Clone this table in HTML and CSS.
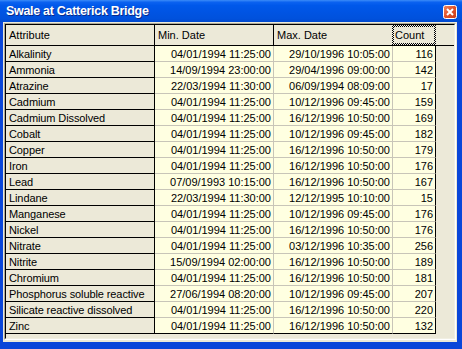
FILE: index.html
```html
<!DOCTYPE html>
<html>
<head>
<meta charset="utf-8">
<link rel="stylesheet" href="styles.css">
</head>
<body>
<div class="window">
  <div class="titlebar">
    <span class="title">Swale at Catterick Bridge</span>
    <span class="close">
      <svg width="14" height="14" viewBox="0 0 14 14">
        <defs>
          <linearGradient id="cg" x1="0" y1="0" x2="1" y2="1">
            <stop offset="0" stop-color="#F08A62"/>
            <stop offset="0.5" stop-color="#E0522A"/>
            <stop offset="1" stop-color="#C53A16"/>
          </linearGradient>
        </defs>
        <rect x="0.5" y="0.5" width="13" height="13" rx="2" fill="url(#cg)" stroke="#fff"/>
        <path d="M4 4 L10 10 M10 4 L4 10" stroke="#fff" stroke-width="2"/>
      </svg>
    </span>
  </div>
  <div class="client">
    <div class="frame">
      <div class="grid">
        <div class="row head">
          <div class="cell c-attr">Attribute</div>
          <div class="cell c-min">Min. Date</div>
          <div class="cell c-max">Max. Date</div>
          <div class="cell c-count"><span class="focus"><span class="focus-inner">Count</span></span></div>
        </div>
        <div class="row"><div class="cell c-attr">Alkalinity</div><div class="cell c-min">04/01/1994 11:25:00</div><div class="cell c-max">29/10/1996 10:05:00</div><div class="cell c-count">116</div></div>
        <div class="row"><div class="cell c-attr">Ammonia</div><div class="cell c-min">14/09/1994 23:00:00</div><div class="cell c-max">29/04/1996 09:00:00</div><div class="cell c-count">142</div></div>
        <div class="row"><div class="cell c-attr">Atrazine</div><div class="cell c-min">22/03/1994 11:30:00</div><div class="cell c-max">06/09/1994 08:09:00</div><div class="cell c-count">17</div></div>
        <div class="row"><div class="cell c-attr">Cadmium</div><div class="cell c-min">04/01/1994 11:25:00</div><div class="cell c-max">10/12/1996 09:45:00</div><div class="cell c-count">159</div></div>
        <div class="row"><div class="cell c-attr">Cadmium Dissolved</div><div class="cell c-min">04/01/1994 11:25:00</div><div class="cell c-max">16/12/1996 10:50:00</div><div class="cell c-count">169</div></div>
        <div class="row"><div class="cell c-attr">Cobalt</div><div class="cell c-min">04/01/1994 11:25:00</div><div class="cell c-max">10/12/1996 09:45:00</div><div class="cell c-count">182</div></div>
        <div class="row"><div class="cell c-attr">Copper</div><div class="cell c-min">04/01/1994 11:25:00</div><div class="cell c-max">16/12/1996 10:50:00</div><div class="cell c-count">179</div></div>
        <div class="row"><div class="cell c-attr">Iron</div><div class="cell c-min">04/01/1994 11:25:00</div><div class="cell c-max">16/12/1996 10:50:00</div><div class="cell c-count">176</div></div>
        <div class="row"><div class="cell c-attr">Lead</div><div class="cell c-min">07/09/1993 10:15:00</div><div class="cell c-max">16/12/1996 10:50:00</div><div class="cell c-count">167</div></div>
        <div class="row"><div class="cell c-attr">Lindane</div><div class="cell c-min">22/03/1994 11:30:00</div><div class="cell c-max">12/12/1995 10:10:00</div><div class="cell c-count">15</div></div>
        <div class="row"><div class="cell c-attr">Manganese</div><div class="cell c-min">04/01/1994 11:25:00</div><div class="cell c-max">10/12/1996 09:45:00</div><div class="cell c-count">176</div></div>
        <div class="row"><div class="cell c-attr">Nickel</div><div class="cell c-min">04/01/1994 11:25:00</div><div class="cell c-max">16/12/1996 10:50:00</div><div class="cell c-count">176</div></div>
        <div class="row"><div class="cell c-attr">Nitrate</div><div class="cell c-min">04/01/1994 11:25:00</div><div class="cell c-max">03/12/1996 10:35:00</div><div class="cell c-count">256</div></div>
        <div class="row"><div class="cell c-attr">Nitrite</div><div class="cell c-min">15/09/1994 02:00:00</div><div class="cell c-max">16/12/1996 10:50:00</div><div class="cell c-count">189</div></div>
        <div class="row"><div class="cell c-attr">Chromium</div><div class="cell c-min">04/01/1994 11:25:00</div><div class="cell c-max">16/12/1996 10:50:00</div><div class="cell c-count">181</div></div>
        <div class="row"><div class="cell c-attr">Phosphorus soluble reactive</div><div class="cell c-min">27/06/1994 08:20:00</div><div class="cell c-max">10/12/1996 09:45:00</div><div class="cell c-count">207</div></div>
        <div class="row"><div class="cell c-attr">Silicate reactive dissolved</div><div class="cell c-min">04/01/1994 11:25:00</div><div class="cell c-max">16/12/1996 10:50:00</div><div class="cell c-count">220</div></div>
        <div class="row last"><div class="cell c-attr">Zinc</div><div class="cell c-min">04/01/1994 11:25:00</div><div class="cell c-max">16/12/1996 10:50:00</div><div class="cell c-count">132</div></div>
      </div>
    </div>
  </div>
</div>
</body>
</html>
```

FILE: styles.css
```css
html, body {
  margin: 0;
  padding: 0;
}
body {
  width: 462px;
  height: 349px;
  overflow: hidden;
  background: #0A46D9;
  font-family: "Liberation Sans", Arial, sans-serif;
  font-size: 11px;
  color: #000;
}
.window {
  display: flex;
  flex-direction: column;
  width: 462px;
  height: 349px;
}
.titlebar {
  height: 22px;
  flex: none;
  display: flex;
  align-items: center;
  justify-content: space-between;
  padding: 0 5px 0 6px;
  background: linear-gradient(to bottom, #3C8CF8 0%, #0B62F0 10%, #0058EA 25%, #0054E3 55%, #0051DC 85%, #0049CF 100%);
}
.title {
  color: #fff;
  font-weight: bold;
  font-size: 12.5px;
  letter-spacing: -0.3px;
  text-shadow: 1px 1px 0 #0A2A8A;
}
.close {
  display: flex;
  margin-top: 2px;
}
.client {
  flex: 1;
  display: flex;
  margin: 0 5px 7px 3px;
  padding: 1px 1px 2px 1px;
  background: #ECE9D8;
}
.frame {
  flex: 1;
  display: flex;
  border: 1px solid;
  border-color: #ACA899 #FFFFFF #FFFFFF #ACA899;
}
.grid {
  flex: 1;
  border: 1px solid;
  border-color: #000 #F1EFE2 #F1EFE2 #000;
  background: #ECE9D8;
}
.row {
  display: flex;
  height: 16px;
}
.cell {
  box-sizing: border-box;
  display: flex;
  align-items: center;
  white-space: nowrap;
  overflow: hidden;
  border-right: 1px solid #C8C5B8;
  border-bottom: 1px solid #C8C5B8;
  background: #FFFFE1;
  justify-content: flex-end;
  padding-right: 2px;
}
.c-attr {
  width: 149px;
  background: #ECE9D8;
  border-color: #000;
  justify-content: flex-start;
  padding: 0 0 0 3px;
  letter-spacing: -0.1px;
}
.c-min { width: 119px; }
.c-max { width: 119px; }
.c-count {
  width: 43px;
  border-right-color: #000;
}
.row.last .cell {
  border-bottom-color: #000;
}
.row.head {
  height: 21px;
  border-bottom: 1px solid #000;
  box-sizing: border-box;
}
.row.head .cell {
  background: #ECE9D8;
  border-bottom: none;
  border-right-color: #000;
  justify-content: flex-start;
  padding: 0 0 0 3px;
  letter-spacing: 0;
}
.row.head .c-max {
  width: 118px;
  border-right: none;
}
.row.head .c-count {
  width: 44px;
  padding: 0;
  border-right: none;
  align-items: stretch;
}
.focus {
  flex: 1;
  display: flex;
  padding: 2px;
  background: repeating-conic-gradient(#000 0 25%, #F4F2E8 0 50%) 0 0 / 2px 2px;
}
.focus-inner {
  flex: 1;
  display: flex;
  align-items: center;
  padding-left: 1px;
  background: #ECE9D8;
}
```
